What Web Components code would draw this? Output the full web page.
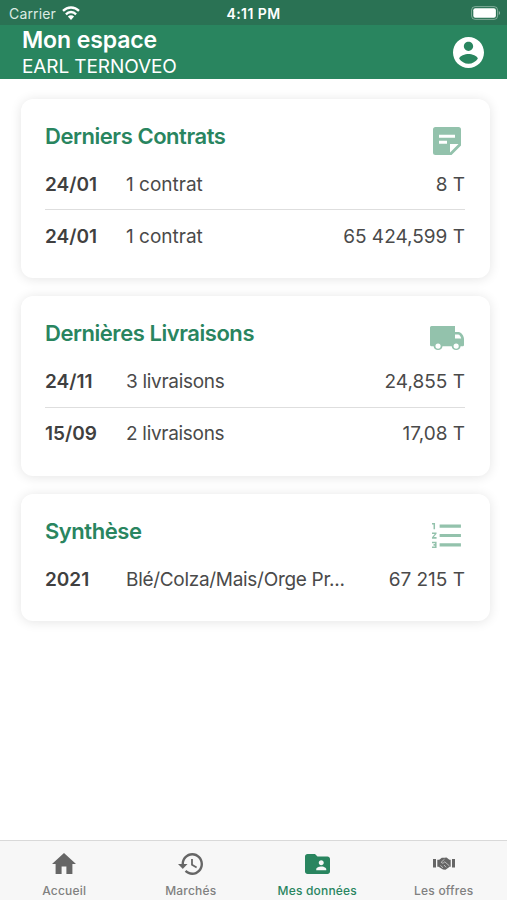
<!DOCTYPE html>
<html lang="fr">
<head>
<meta charset="utf-8">
<title>Mon espace</title>
<style>
  html, body {
    margin: 0;
    height: 100%;
  }
  body {
    font-family: Inter, "Liberation Sans", sans-serif;
    background: #fff;
    color: #4a4a4a;
    overflow: hidden;
  }
  .tight {
    --text-tracking: -.3px;
  }
</style>
</head>
<body>
<app-screen>
  <status-bar slot="top" carrier="Carrier" time="4:11 PM"></status-bar>
  <app-header slot="top">
    <span slot="title">Mon espace</span>
    <span slot="subtitle">EARL TERNOVEO</span>
  </app-header>

  <data-card heading="Derniers Contrats" icon="note">
    <data-row label="24/01" value="8 T">1 contrat</data-row>
    <data-row label="24/01" value="65 424,599 T">1 contrat</data-row>
  </data-card>
  <data-card class="tight" heading="Dernières Livraisons" icon="truck">
    <data-row label="24/11" value="24,855 T">3 livraisons</data-row>
    <data-row label="15/09" value="17,08 T">2 livraisons</data-row>
  </data-card>
  <data-card class="tight" heading="Synthèse" icon="list">
    <data-row label="2021" value="67 215 T">Blé/Colza/Mais/Orge Pr...</data-row>
  </data-card>

  <tab-bar slot="bottom">
    <tab-item icon="home">Accueil</tab-item>
    <tab-item icon="history">Marchés</tab-item>
    <tab-item icon="folder" active>Mes données</tab-item>
    <tab-item icon="handshake">Les offres</tab-item>
  </tab-bar>
</app-screen>

<script>
const ICONS = {
  account: { box: "2 2 20 20", w: 31, h: 31, body: '<path d="M12 2C6.48 2 2 6.48 2 12s4.48 10 10 10 10-4.48 10-10S17.52 2 12 2zm0 3c1.66 0 3 1.34 3 3s-1.34 3-3 3-3-1.34-3-3 1.34-3 3-3zm0 14.2c-2.5 0-4.71-1.28-6-3.22.03-1.99 4-3.08 6-3.08 1.99 0 5.97 1.09 6 3.08-1.29 1.94-3.5 3.22-6 3.22z"/>' },
  note: { box: "0 0 28 28", w: 28, h: 28, body: '<path fill-rule="evenodd" d="M2.5 0h23A2.500 2.500 0 0 1 28 2.500V18.500L18.500 28h-16A2.500 2.500 0 0 1 0 25.500v-23A2.500 2.500 0 0 1 2.500 0zM6 7.700v3h16v-3zM6 13.800v3h8v-3zM17 17v8.500L25.500 17z"/>' },
  truck: { box: "0 0 34 25", w: 34, h: 25, body: '<path fill-rule="evenodd" d="M1.500 0H25v6h3.500C31.500 6 34 10 34 13v6a1.200 1.200 0 0 1-1.200 1.200H30.600a4.500 4.500 0 0 1-8.900 0H12.500a4.500 4.500 0 0 1-8.900 0H1.500A1.500 1.500 0 0 1 0 18.700V1.500A1.500 1.500 0 0 1 1.500 0zM25 8.500v4h6.200c-.5-2.200-1.600-4-3.200-4zM8.050 17.500a2.600 2.600 0 1 0 0 5.200 2.600 2.600 0 0 0 0-5.200zM26.150 17.500a2.600 2.600 0 1 0 0 5.200 2.600 2.600 0 0 0 0-5.200z"/>' },
  list: { box: "2 4 19.700 16", w: 30, h: 25, body: '<path d="M2 17h2v.5H3v1h1v.5H2v1h3v-4H2v1zm1-9h1V4H2v1h1v3zm-1 3h1.800L2 13.100v.9h3v-1H3.200L5 10.900V10H2v1zm5-6v2h14V5H7zm0 14h14v-2H7v2zm0-6h14v-2H7v2z"/>' },
  home: { box: "2 3 20 17", w: 24, h: 21, body: '<path d="M10 20v-6h4v6h5v-8h3L12 3 2 12h3v8z"/>' },
  history: { box: "1 3 21 18", w: 25, h: 22, body: '<path d="M13 3c-4.970 0-9 4.030-9 9H1l3.890 3.890.07.14L9 12H6c0-3.870 3.130-7 7-7s7 3.130 7 7-3.130 7-7 7c-1.930 0-3.680-.79-4.940-2.060l-1.420 1.420C8.270 19.990 10.510 21 13 21c4.970 0 9-4.030 9-9s-4.030-9-9-9zm-1 5v5l4.280 2.540.72-1.210-3.500-2.080V8H12z"/>' },
  folder: { box: "2 4 20 16", w: 25, h: 20, body: '<path d="M20 6h-8l-2-2H4c-1.100 0-1.990.9-1.990 2L2 18c0 1.100.9 2 2 2h16c1.100 0 2-.9 2-2V8c0-1.100-.9-2-2-2zm-5 3c1.100 0 2 .9 2 2s-.9 2-2 2-2-.9-2-2 .9-2 2-2zm4 8h-8v-1c0-1.330 2.670-2 4-2s4 .67 4 2v1z"/>' },
  handshake: { box: "0 0 22 13", w: 22, h: 13, body: '<path d="M0 2h3v8.500H0zM19 2h3v8.500h-3z"/><path d="M4.300 2.800h1.900L8.800.7l2.600.1L13.500.5l2.900 2.300h1.300v6.900h-1L12.500 12.700 10 12.500 5.500 9.700H4.300z"/><path d="M11.500 2.200 8.200 5.200c.7 1.500 2.300 1.200 3.600-.4L16.500 9M7.500 8.500l2.500 2.300M11 8l2.200 2.300" fill="none" stroke="#f7f7f7" stroke-opacity=".75" stroke-width=".8"/>' },
  wifi: { box: "0 0 18 13", w: 18, h: 14, body: '<path d="M1 4.600a11.500 11.500 0 0 1 16 0M3.900 7.700a7.300 7.300 0 0 1 10.200 0" fill="none" stroke="currentColor" stroke-width="2.300"/><path d="M9 13 5.900 9.800a4.500 4.500 0 0 1 6.200 0z"/>' },
  battery: { box: "0 0 30 14", w: 30, h: 14, body: '<rect x=".6" y=".6" width="26" height="12.800" rx="3.500" fill="none" stroke="currentColor" stroke-opacity=".4"/><rect x="2.300" y="2.300" width="22.600" height="9.400" rx="2"/><path d="M27.800 5c1.600.5 1.600 3.500 0 4z" opacity=".5"/>' }
};

class AppIcon extends HTMLElement {
  constructor() {
    super();
    this.attachShadow({ mode: "open" });
  }

  connectedCallback() {
    const icon = ICONS[this.getAttribute("name")];
    this.shadowRoot.innerHTML = `
      <style>
        :host { display: block; flex: none; }
        svg { display: block; fill: currentColor; }
      </style>
      <svg width="${icon.w}" height="${icon.h}" viewBox="${icon.box}" preserveAspectRatio="none" aria-hidden="true">${icon.body}</svg>
    `;
  }
}

class AppScreen extends HTMLElement {
  constructor() {
    super();
    this.attachShadow({ mode: "open" }).innerHTML = `
      <style>
        :host { display: flex; flex-direction: column; height: 100vh; }
        main {
          flex: 1;
          min-height: 0;
          display: flex;
          flex-direction: column;
          gap: 18px;
          padding: 19.500px 17px 0 20.500px;
        }
      </style>
      <slot name="top"></slot>
      <main><slot></slot></main>
      <slot name="bottom"></slot>
    `;
  }
}

class StatusBar extends HTMLElement {
  constructor() {
    super();
    this.attachShadow({ mode: "open" });
  }

  connectedCallback() {
    this.shadowRoot.innerHTML = `
      <style>
        :host {
          display: grid;
          grid-template-columns: 1fr auto 1fr;
          align-items: center;
          box-sizing: border-box;
          height: 25px;
          padding: 2px 6px 0 9px;
          background: #2a7254;
          color: #fff;
          font-size: 14px;
        }
        .carrier { display: flex; align-items: center; gap: 6px; color: #dcebe3; letter-spacing: .15px; }
        .carrier app-icon { color: #fff; margin-top: -2px; }
        .time { font-weight: 600; font-size: 14px; letter-spacing: .45px; margin-left: -3px; }
        .battery { justify-self: end; margin-top: -1px; }
      </style>
      <div class="carrier"><span>${this.getAttribute("carrier")}</span><app-icon name="wifi"></app-icon></div>
      <span class="time">${this.getAttribute("time")}</span>
      <app-icon class="battery" name="battery"></app-icon>
    `;
  }
}

class AppHeader extends HTMLElement {
  constructor() {
    super();
    this.attachShadow({ mode: "open" }).innerHTML = `
      <style>
        :host {
          display: flex;
          justify-content: space-between;
          align-items: center;
          box-sizing: border-box;
          height: 54px;
          padding: 0 23.500px 0 22px;
          background: #29855f;
          color: #fff;
        }
        .titles { display: flex; flex-direction: column; padding-top: 2px; }
        .title { font-size: 23px; line-height: 27px; font-weight: 600; letter-spacing: -.1px; }
        .subtitle { font-size: 19px; line-height: 25px; letter-spacing: -.1px; }
      </style>
      <div class="titles">
        <span class="title"><slot name="title"></slot></span>
        <span class="subtitle"><slot name="subtitle"></slot></span>
      </div>
      <app-icon name="account"></app-icon>
    `;
  }
}

class DataCard extends HTMLElement {
  constructor() {
    super();
    this.attachShadow({ mode: "open" });
  }

  connectedCallback() {
    this.shadowRoot.innerHTML = `
      <style>
        :host {
          display: block;
          box-sizing: border-box;
          padding: 16px 25px 17px 24.500px;
          border-radius: 12px;
          background: #fff;
          box-shadow: 0 1px 12px rgba(0, 0, 0, .11);
        }
        header { display: flex; justify-content: space-between; height: 43.500px; }
        h2 {
          margin: 0;
          font-size: 22px;
          line-height: 42px;
          font-weight: 600;
          letter-spacing: -.45px;
          color: #29855f;
        }
        .icon {
          display: flex;
          align-items: center;
          justify-content: center;
          width: 36px;
          height: 52px;
          color: #93c2ac;
        }
      </style>
      <header>
        <h2>${this.getAttribute("heading")}</h2>
        <div class="icon"><app-icon name="${this.getAttribute("icon")}"></app-icon></div>
      </header>
      <slot></slot>
    `;
  }
}

class DataRow extends HTMLElement {
  constructor() {
    super();
    this.attachShadow({ mode: "open" });
  }

  connectedCallback() {
    this.shadowRoot.innerHTML = `
      <style>
        :host {
          display: grid;
          grid-template-columns: 81px 1fr auto;
          align-items: center;
          box-sizing: border-box;
          height: 51px;
          padding-top: 1px;
          font-size: 19px;
          white-space: nowrap;
        }
        :host(:not(:last-child)) { height: 52px; border-bottom: 1px solid #dedede; }
        .label { font-weight: 600; color: #404040; }
        .text { letter-spacing: var(--text-tracking, 0); }
      </style>
      <span class="label">${this.getAttribute("label")}</span>
      <span class="text"><slot></slot></span>
      <span class="value">${this.getAttribute("value")}</span>
    `;
  }
}

class TabBar extends HTMLElement {
  constructor() {
    super();
    this.attachShadow({ mode: "open" }).innerHTML = `
      <style>
        :host {
          display: grid;
          grid-template-columns: repeat(4, 1fr);
          box-sizing: border-box;
          height: 60px;
          padding: 0 0 0 1px;
          border-top: 1px solid #d9d9d9;
          background: #f7f7f7;
        }
      </style>
      <slot></slot>
    `;
  }
}

class TabItem extends HTMLElement {
  constructor() {
    super();
    this.attachShadow({ mode: "open" });
  }

  connectedCallback() {
    this.shadowRoot.innerHTML = `
      <style>
        :host {
          display: flex;
          flex-direction: column;
          align-items: center;
          color: #666;
        }
        .icon { display: flex; align-items: center; height: 45px; }
        .label { margin-top: -3px; font-size: 12px; line-height: 16px; letter-spacing: .2px; font-weight: 500; color: #808080; }
        :host([active]), :host([active]) .label { color: #29855f; }
      </style>
      <div class="icon"><app-icon name="${this.getAttribute("icon")}"></app-icon></div>
      <span class="label"><slot></slot></span>
    `;
  }
}

customElements.define("app-icon", AppIcon);
customElements.define("app-screen", AppScreen);
customElements.define("status-bar", StatusBar);
customElements.define("app-header", AppHeader);
customElements.define("data-card", DataCard);
customElements.define("data-row", DataRow);
customElements.define("tab-bar", TabBar);
customElements.define("tab-item", TabItem);
</script>
</body>
</html>
